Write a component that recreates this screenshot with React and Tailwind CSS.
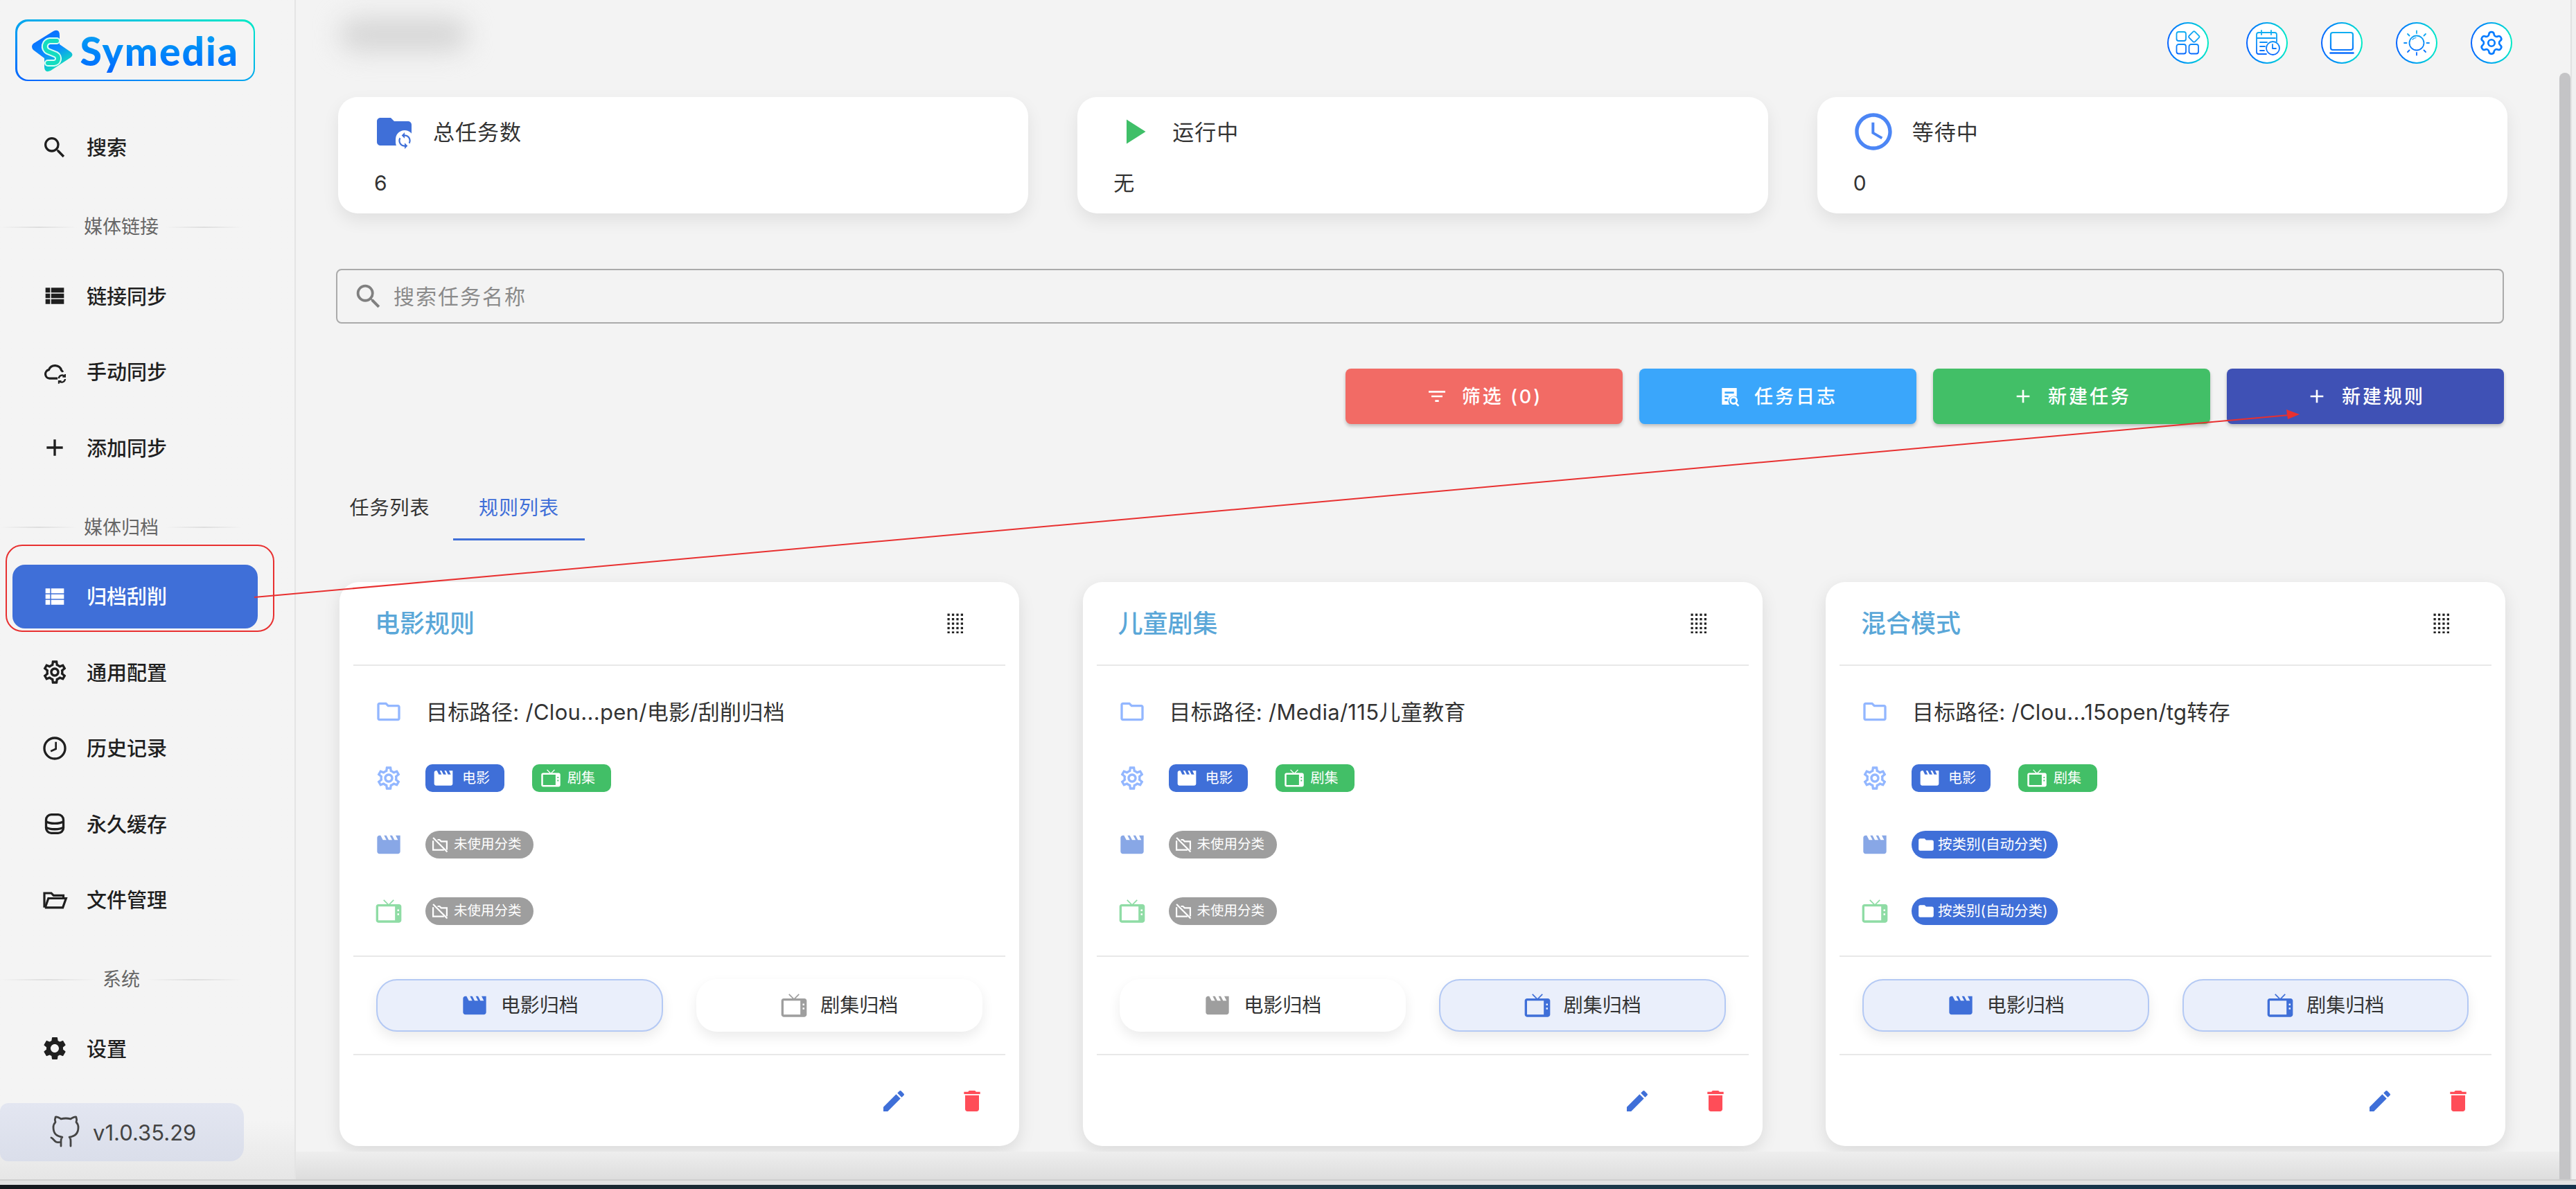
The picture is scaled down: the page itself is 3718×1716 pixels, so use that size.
import React from 'react';
import {
  MdSearch, MdAdd, MdOutlineSettings, MdSettings, MdFolder, MdSync, MdPlayArrow,
  MdOutlineAccessTime, MdFilterList, MdEdit, MdDelete, MdMovie, MdOutlineFolder,
} from 'react-icons/md';
import { FiGithub } from 'react-icons/fi';
import { Settings } from 'lucide-react';

const TvIcon = ({ className }) => (
  <svg viewBox="0 0 24 24" className={className} fill="currentColor">
    <path
      fillRule="evenodd"
      d="M21 6h-7.59l3.29-3.29L16 2l-4 4-4-4-.71.71L10.59 6H3c-1.1 0-2 .89-2 2v12c0 1.1.9 2 2 2h18c1.1 0 2-.9 2-2V8c0-1.11-.9-2-2-2zM3 8h14.5v12H3V8zm16.5 2.5h1.5V12h-1.5v-1.5zm0 3.5h1.5v1.5h-1.5V14z"
    />
  </svg>
);

const ClockIcon = ({ className }) => (
  <svg viewBox="0 0 24 24" className={className} fill="none" stroke="currentColor" strokeWidth="2">
    <circle cx="12" cy="12" r="9" />
    <path d="M13 6.5V12.5L8.5 14.5" strokeWidth="1.6" />
  </svg>
);

const DbIcon = ({ className }) => (
  <svg viewBox="0 0 24 24" className={className} fill="none" stroke="currentColor" strokeWidth="2">
    <rect x="4.5" y="4" width="15" height="16" rx="4.5" />
    <path d="M4.5 10c3 2.2 12 2.2 15 0M4.5 15c3 2.2 12 2.2 15 0" />
  </svg>
);

const ListBlockIcon = ({ className }) => (
  <svg viewBox="0 0 24 24" className={className} fill="currentColor">
    <path d="M4 5h4v4.100H4zM8.900 5H20v4.100H8.900zM4 10h4v4H4zM8.900 10H20v4H8.900zM4 14.900h4V19H4zM8.900 14.900H20V19H8.900z" />
  </svg>
);

const CloudSyncIcon = ({ className }) => (
  <svg viewBox="0 0 24 24" className={className} fill="none" stroke="currentColor" strokeWidth="1.900">
    <path d="M14.500 17.500H7.500a3.800 3.800 0 0 1-.6-7.500 5.800 5.800 0 0 1 10.900.5 3 3 0 0 1 1.200 1.500" />
    <path d="M15.500 17.500a3 3 0 0 1 5-2M21 18a3 3 0 0 1-5 2" strokeWidth="1.400" />
    <path d="M21 13.800v2.200h-2.200M15.500 22v-2.200h2.200" strokeWidth="1.200" />
  </svg>
);

const FolderOpenIcon = ({ className }) => (
  <svg viewBox="0 0 24 24" className={className} fill="none" stroke="currentColor" strokeWidth="1.900">
    <path d="M3 18.500V6h6l2 2h8.500v2.500" />
    <path d="M3.500 18.500H19l2.800-8H6.500l-2.600 7.500" />
  </svg>
);

const FolderOffIcon = ({ className }) => (
  <svg viewBox="0 0 24 24" className={className} fill="none" stroke="currentColor" strokeWidth="1.900">
    <path d="M3.500 3.500 21 21" />
    <path d="M3.500 7v11.500H17" />
    <path d="M9 6h2.500l2 2h7v10.500" />
  </svg>
);

const LogDocIcon = ({ className }) => (
  <svg viewBox="0 0 24 24" className={className} fill="currentColor">
    <path d="M4 3h16v9.500A6 6 0 0 0 12 21H4V3zm3 4v2h10V7H7zm0 4v2h4v-2H7zm0 4v2h3v-2H7z" />
    <path d="M16.500 12a4.500 4.500 0 0 1 3.600 7.200l2.600 2.600-1.300 1.300-2.700-2.600A4.500 4.500 0 1 1 16.500 12zm0 2a2.500 2.500 0 1 0 0 5 2.500 2.500 0 0 0 0-5z" />
  </svg>
);

const DragDots = () => (
  <svg viewBox="0 0 24 30" className="w-[23px] h-[29px]" fill="#222">
    {[0, 1, 2, 3].map((x) =>
      [0, 1, 2, 3, 4].map((y) => <rect key={`${x}-${y}`} x={0.5 + x * 6.7} y={0.5 + y * 6.7} width="3.4" height="3.4" />)
    )}
  </svg>
);

const Logo = () => (
  <div className="w-[346px] h-[89px] ml-[22px] mt-[28px] rounded-[18px] p-[2.5px] bg-linear-to-tr from-[#0a62ff] via-[#06a7ee] to-[#00ebc4]">
    <div className="w-full h-full rounded-[16px] bg-[#f4f4f4] flex items-center pl-[20px] gap-[11px]">
      <svg viewBox="0 0 60 62" className="w-[60px] h-[62px] shrink-0">
        <defs>
          <linearGradient id="logoBody" x1="0" y1="0" x2="0.5" y2="1">
            <stop offset="0" stopColor="#0a62ff" />
            <stop offset="0.6" stopColor="#0a8cff" />
            <stop offset="1" stopColor="#12e0bc" />
          </linearGradient>
        </defs>
        <path d="M3 21 32 3q9-4 9 6v13l16 11q5 4 0 8L28 60q-9 4-9-6V42L3 30q-4-5 0-9Z" fill="url(#logoBody)" />
        <path d="M37 17H27a8 8 0 0 0-3 15l12 5a6.500 6.500 0 0 1-3 12h-9" fill="none" stroke="#d8fff5" strokeWidth="10" strokeLinecap="round" />
        <path d="M37 17H27a8 8 0 0 0-3 15l12 5a6.500 6.500 0 0 1-3 12h-9" fill="none" stroke="#14dcc0" strokeWidth="6" strokeLinecap="round" />
      </svg>
      <span className="font-[Lato,sans-serif] font-black text-[57px] leading-[70px] tracking-[2px] text-transparent bg-clip-text bg-linear-to-b from-[#19a9f0] to-[#0a62ff]">
        Symedia
      </span>
    </div>
  </div>
);

const NavItem = ({ icon: Icon, label, active }) => (
  <div
    className={`h-[92px] w-[354px] ml-[18px] mt-[17.5px] flex items-center pl-[41px] gap-[26px] rounded-[18px] ${
      active ? 'bg-[#3f6fd8] text-white' : 'text-[#1f1f1f]'
    }`}
  >
    <Icon className="w-[40px] h-[40px] shrink-0" />
    <span className="text-[29px] font-medium leading-none mt-[2px]">{label}</span>
  </div>
);

const NavLabel = ({ label }) => (
  <div className="h-[28px] w-[350px] mt-[55px] mb-[22px] flex items-center gap-[10px]">
    <div className="flex-1 h-[2px] bg-linear-to-r from-transparent via-[#dedede] to-transparent" />
    <span className="text-[27px] leading-none text-[#666]">{label}</span>
    <div className="flex-1 h-[2px] bg-linear-to-r from-transparent via-[#dedede] to-transparent" />
  </div>
);

const Sidebar = () => (
  <aside className="w-[427px] h-full shrink-0 border-r-2 border-[#e4e4e4] bg-linear-to-b from-[#f4f4f4] via-[#f4f4f4] via-95% to-[#e6e6e6] flex flex-col">
    <Logo />
    <div className="mt-[32px]">
      <NavItem icon={MdSearch} label="搜索" />
    </div>
    <NavLabel label="媒体链接" />
    <NavItem icon={ListBlockIcon} label="链接同步" />
    <NavItem icon={CloudSyncIcon} label="手动同步" />
    <NavItem icon={MdAdd} label="添加同步" />
    <NavLabel label="媒体归档" />
    <NavItem icon={ListBlockIcon} label="归档刮削" active />
    <NavItem icon={MdOutlineSettings} label="通用配置" />
    <NavItem icon={ClockIcon} label="历史记录" />
    <NavItem icon={DbIcon} label="永久缓存" />
    <NavItem icon={FolderOpenIcon} label="文件管理" />
    <NavLabel label="系统" />
    <NavItem icon={MdSettings} label="设置" />
    <div className="w-[352px] h-[84px] mt-[33px] rounded-r-[20px] rounded-l-[12px] bg-linear-to-b from-[#e3e6f1] to-[#dadeea] flex items-center pl-[70px] gap-[16px]">
      <FiGithub className="w-[48px] h-[52px] text-[#444] [stroke-width:1.4]" />
      <span className="text-[31px] leading-none text-[#444]">v1.0.35.29</span>
    </div>
  </aside>
);

const RoundIcon = ({ children, className }) => (
  <div className={`w-[60px] h-[60px] rounded-full p-[2px] bg-linear-to-r from-[#0a62ff] via-[#06a7ee] to-[#00ebc4] ${className}`}>
    <div className="w-full h-full rounded-full bg-white flex items-center justify-center">{children}</div>
  </div>
);

const IconSvg = ({ children }) => (
  <svg viewBox="-20 -20 40 40" className="w-[40px] h-[40px]" fill="none" stroke="url(#topIcon)" strokeWidth="1.8" strokeLinecap="round" strokeLinejoin="round">
    {children}
  </svg>
);

const TopBar = () => (
  <header className="h-[124px] flex items-center shrink-0 pl-[63px]">
    <div className="w-[185px] h-[48px] mb-[24px] rounded-full bg-[#d6d6d6] blur-[18px]" />
    <div className="ml-auto flex items-center mr-[68px]">
      <svg className="w-0 h-0">
        <defs>
          <linearGradient id="topIcon" gradientUnits="userSpaceOnUse" x1="0" y1="-18" x2="0" y2="18">
            <stop offset="0" stopColor="#10b4f0" />
            <stop offset="1" stopColor="#0a66ff" />
          </linearGradient>
        </defs>
      </svg>
      <RoundIcon>
        <IconSvg>
          <rect x="-16.500" y="-16" width="13.500" height="13" rx="3" />
          <rect x="2.700" y="-15" width="12" height="12" rx="2" transform="rotate(45 8.700 -9)" />
          <rect x="-16.500" y="2" width="13.500" height="13.500" rx="3" />
          <rect x="1.500" y="2" width="13.500" height="13.500" rx="3" />
        </IconSvg>
      </RoundIcon>
      <RoundIcon className="ml-[54px]">
        <IconSvg>
          <path d="M-1 16H-12a3 3 0 0 1-3-3V-12a3 3 0 0 1 3-3H11a3 3 0 0 1 3 3V-2" />
          <path d="M-8-18v6M6-18v6M-14-7H12M-10-1H0M-10 5h7M-10 11h6" />
          <circle cx="8.500" cy="7.500" r="9.500" />
          <path d="M8 2v6h5" />
        </IconSvg>
      </RoundIcon>
      <RoundIcon className="ml-[48px]">
        <IconSvg>
          <rect x="-16" y="-15" width="32" height="25" rx="3" strokeWidth="2.200" />
          <path d="M-16.500 14.500H16.500" strokeWidth="2.600" />
        </IconSvg>
      </RoundIcon>
      <RoundIcon className="ml-[48px]">
        <IconSvg>
          <circle cx="0" cy="0" r="10.500" />
          <path d="M-6-5a8 8 0 0 1 5-2.500" strokeWidth="1.200" />
          <path d="M0-17.500v3.500M0 14v3.500M-18 0h3.500M14.500 0H18M-13-13l2.500 2.500M10.500 10.500 13 13M-13 13l2.500-2.500M10.500-10.500 13-13" />
        </IconSvg>
      </RoundIcon>
      <RoundIcon className="ml-[48px]">
        <Settings className="w-[38px] h-[38px] text-[#0a7dff]" strokeWidth={1.7} />
      </RoundIcon>
    </div>
  </header>
);

const StatCard = ({ icon, title, value }) => (
  <div className="h-[168px] rounded-[28px] bg-white shadow-[0_10px_24px_rgba(0,0,0,0.08)] pl-[51px] pt-[20px]">
    <div className="flex items-center h-[60px]">
      <div className="relative w-[60px] h-[60px] flex items-center justify-center shrink-0">{icon}</div>
      <span className="ml-[26px] text-[31px] leading-none tracking-[1px] text-[#333]">{title}</span>
    </div>
    <div className="mt-[26px] ml-[1px] text-[30px] leading-[36px] text-[#333]">{value}</div>
  </div>
);

const Stats = () => (
  <section className="grid grid-cols-3 gap-[71px] pl-[61px] pr-[75px] mt-[16px]">
    <StatCard
      title="总任务数"
      value="6"
      icon={
        <>
          <MdFolder className="w-[60px] h-[60px] text-[#3f6fd8]" />
          <span className="absolute right-[2px] bottom-[2px] w-[26px] h-[30px] rounded-full bg-white flex items-center justify-center">
            <MdSync className="w-[26px] h-[26px] text-[#3f6fd8]" />
          </span>
        </>
      }
    />
    <StatCard title="运行中" value="无" icon={<MdPlayArrow className="w-[60px] h-[60px] text-[#3fbf68]" />} />
    <StatCard title="等待中" value="0" icon={<MdOutlineAccessTime className="w-[64px] h-[64px] shrink-0 text-[#4c86f5]" />} />
  </section>
);

const SearchBox = () => (
  <div className="ml-[58px] mr-[80px] mt-[80px] h-[79px] rounded-[8px] border-2 border-[#aaa] flex items-center pl-[22px] gap-[13px]">
    <MdSearch className="w-[46px] h-[46px] text-[#808080]" />
    <span className="text-[30px] leading-none tracking-[2px] text-[#8a8a8a]">搜索任务名称</span>
  </div>
);

const ActionButton = ({ icon: Icon, label, className }) => (
  <div className={`w-[400px] h-[80px] rounded-[8px] shadow-[0_3px_5px_rgba(0,0,0,0.22)] text-white flex items-center justify-center gap-[20px] ${className}`}>
    <Icon className="w-[32px] h-[32px]" />
    <span className="text-[27px] leading-none tracking-[3px] font-medium">{label}</span>
  </div>
);

const Actions = () => (
  <div className="flex justify-end gap-[24px] mr-[80px] mt-[65px]">
    <ActionButton icon={MdFilterList} label="筛选 (0)" className="bg-[#f26b65]" />
    <ActionButton icon={LogDocIcon} label="任务日志" className="bg-[#3aa6fb]" />
    <ActionButton icon={MdAdd} label="新建任务" className="bg-[#42bf67]" />
    <ActionButton icon={MdAdd} label="新建规则" className="bg-[#3f51b5]" />
  </div>
);

const Tabs = () => (
  <div className="flex ml-[44px] mt-[85px] h-[83px]">
    <div className="w-[183px] flex justify-center pt-[17px] text-[28px] leading-[38px] tracking-[1px] text-[#333]">任务列表</div>
    <div className="w-[190px] flex justify-center pt-[17px] text-[28px] leading-[38px] tracking-[1px] text-[#3f6fd8] border-b-[3px] border-[#3f6fd8]">规则列表</div>
  </div>
);

const MediaChips = () => (
  <div className="flex gap-[40px]">
    <span className="w-[114px] h-[40px] rounded-[10px] bg-[#3f6fd8] text-white flex items-center pl-[10px] gap-[11px]">
      <MdMovie className="w-[32px] h-[32px]" />
      <span className="text-[20px] leading-none">电影</span>
    </span>
    <span className="w-[114px] h-[40px] rounded-[10px] bg-[#42bf67] text-white flex items-center pl-[12px] gap-[9px]">
      <TvIcon className="w-[30px] h-[30px]" />
      <span className="text-[20px] leading-none">剧集</span>
    </span>
  </div>
);

const CategoryChip = ({ auto }) =>
  auto ? (
    <span className="w-[211px] h-[40px] rounded-full bg-[#3f6fd8] text-white flex items-center pl-[8px] gap-[4px]">
      <MdFolder className="w-[26px] h-[26px]" />
      <span className="text-[20.500px] leading-none whitespace-nowrap">按类别(自动分类)</span>
    </span>
  ) : (
    <span className="w-[156px] h-[40px] rounded-full bg-[#9e9e9e] text-white flex items-center pl-[7px] gap-[6px]">
      <FolderOffIcon className="w-[28px] h-[28px]" />
      <span className="text-[19.500px] leading-none whitespace-nowrap">未使用分类</span>
    </span>
  );

const Row = ({ icon, children }) => (
  <div className="h-[96px] flex items-center pl-[51px]">
    <div className="w-[73px] shrink-0">{icon}</div>
    {children}
  </div>
);

const ArchiveButton = ({ icon: Icon, label, on }) => (
  <div
    className={`h-[76px] rounded-[30px] flex items-center justify-center gap-[18px] shadow-[0_8px_18px_rgba(0,0,0,0.08)] ${
      on ? 'bg-[#eaeffb] border-2 border-[#b4c9f4]' : 'bg-white'
    }`}
  >
    <Icon className={`w-[40px] h-[40px] ${on ? 'text-[#3f6fd8]' : 'text-[#9e9e9e]'}`} />
    <span className="text-[28px] leading-none text-[#333]">{label}</span>
  </div>
);

const RuleCard = ({ title, path, auto, movieOn, tvOn }) => (
  <div className="h-[814px] rounded-[28px] bg-white shadow-[0_8px_24px_rgba(0,0,0,0.1)] flex flex-col">
    <div className="h-[121px] mx-[20px] border-b-2 border-[#e8e8e8] flex items-center justify-between pl-[31px] pr-[61px] shrink-0">
      <span className="text-[36px] leading-none font-medium text-[#5aa7d8]">{title}</span>
      <DragDots />
    </div>
    <div className="h-[418px] pt-[18px] shrink-0">
      <Row icon={<MdOutlineFolder className="w-[40px] h-[40px] text-[#93b7ff]" />}>
        <span className="ml-[1px] text-[31px] tracking-[0.3px] leading-none text-[#333] whitespace-nowrap">目标路径: {path}</span>
      </Row>
      <Row icon={<MdOutlineSettings className="w-[40px] h-[40px] text-[#93b7ff]" />}>
        <MediaChips />
      </Row>
      <Row icon={<MdMovie className="w-[40px] h-[40px] text-[#88a7e6]" />}>
        <CategoryChip auto={auto} />
      </Row>
      <Row icon={<TvIcon className="w-[40px] h-[40px] text-[#8fdca5]" />}>
        <CategoryChip auto={auto} />
      </Row>
    </div>
    <div className="h-[144px] mx-[20px] border-y-2 border-[#e8e8e8] grid grid-cols-2 gap-[48px] px-[33px] items-center shrink-0">
      <ArchiveButton icon={MdMovie} label="电影归档" on={movieOn} />
      <ArchiveButton icon={TvIcon} label="剧集归档" on={tvOn} />
    </div>
    <div className="flex-1 flex items-center justify-end pr-[48px] gap-[73px]">
      <MdEdit className="w-[40px] h-[40px] text-[#3f6fd8]" />
      <MdDelete className="w-[40px] h-[40px] text-[#ff4d58]" />
    </div>
  </div>
);

const rules = [
  { title: '电影规则', path: '/Clou...pen/电影/刮削归档', movieOn: true },
  { title: '儿童剧集', path: '/Media/115儿童教育', tvOn: true },
  { title: '混合模式', path: '/Clou...15open/tg转存', auto: true, movieOn: true, tvOn: true },
];

const Annotations = () => (
  <>
    <div className="absolute left-[8px] top-[786px] w-[388px] h-[126px] rounded-[24px] border-2 border-[#e83030] pointer-events-none" />
    <svg className="absolute inset-0 w-[3718px] h-[1716px] pointer-events-none" viewBox="0 0 3718 1716">
      <line x1="367" y1="862" x2="3305" y2="599" stroke="#e83030" strokeWidth="2" />
      <path d="M3319 598 3300 591 3302 605Z" fill="#e83030" />
    </svg>
  </>
);

export default function App() {
  return (
    <div className="relative w-[3718px] h-[1716px] overflow-hidden bg-[#f3f3f3] font-[Inter,'Noto_Sans_CJK_SC',sans-serif]">
      <div className="flex h-[1702px]">
        <Sidebar />
        <div className="flex-1 flex flex-col min-w-0">
          <main className="h-[1662px] overflow-hidden flex flex-col shrink-0">
            <TopBar />
            <Stats />
            <SearchBox />
            <Actions />
            <Tabs />
            <section className="grid grid-cols-3 gap-[91.500px] pl-[63px] pr-[78px] mt-[60px]">
              {rules.map((rule) => (
                <RuleCard key={rule.title} {...rule} />
              ))}
            </section>
          </main>
          <div className="flex-1 bg-linear-to-b from-[#eeeeee] to-[#dddddd]" />
        </div>
        <div className="w-[16px] pt-[105px] shrink-0 bg-[#f3f3f3]">
          <div className="h-full rounded-t-[8px] bg-[#c4c4c6]" />
        </div>
        <div className="w-[8px] shrink-0 border-l-2 border-[#e2e2e2] bg-[#f0f0f0]" />
      </div>
      <div className="h-[8px] border-t-2 border-[#cfcfcf] bg-[#e2e2e2]" />
      <div className="h-[6px] bg-linear-to-r from-[#15181d] via-[#1e3a48] to-[#12304a]" />
      <Annotations />
    </div>
  );
}
